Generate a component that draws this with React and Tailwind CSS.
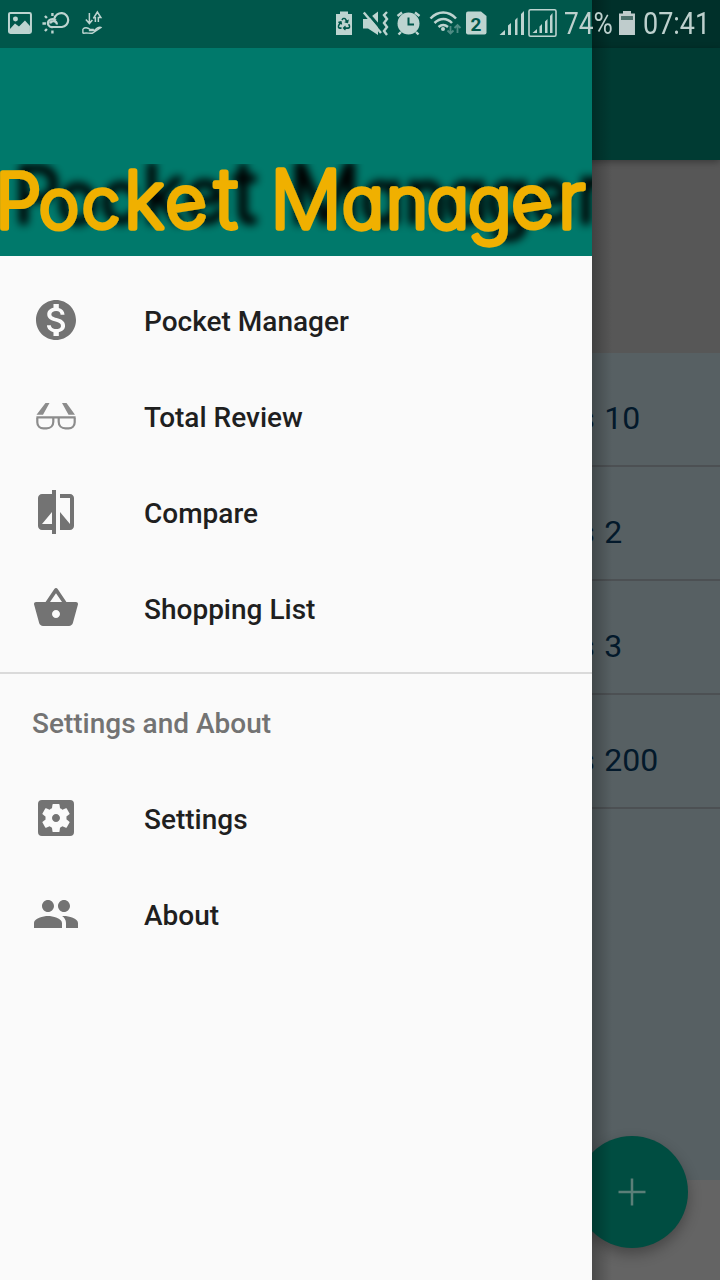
import { MdMonetizationOn, MdCompare, MdShoppingBasket, MdSettingsApplications, MdPeople } from 'react-icons/md';
import { FaRecycle } from 'react-icons/fa';

function Glasses() {
  return (
    <svg className="size-12" viewBox="0 -3.700 48 48" fill="none">
      <path d="M4.500 19 13.500 7.300H17.500L11 19ZM43 19 34.500 7.300H30L36.500 19Z" fill="#8c8c8c" />
      <path d="M4.400 21.600H43.600" stroke="#8c8c8c" strokeWidth="2.200" />
      <path d="M5.300 22V26.500C5.300 30.500 8 32.700 11.500 32.700H14.500C18.500 32.700 21.300 30 21.300 26V22M26.700 22V26C26.700 30 29.500 32.700 33.500 32.700H36.500C40 32.700 42.700 30.500 42.700 26.500V22" stroke="#8c8c8c" strokeWidth="2.200" />
    </svg>
  );
}

function Item({ icon, label }) {
  return (
    <li className="flex h-24 items-center pl-8">
      <span className="flex size-12 text-5xl text-[#737373]">{icon}</span>
      <span className="ml-16 pt-[3px] text-[28px] leading-8 font-medium text-[#1f1f1f]">{label}</span>
    </li>
  );
}

function Wordmark() {
  return (
    <svg className="block h-[92px] w-[592px] overflow-hidden" viewBox="0 0 592 92">
      <defs>
        <filter id="shade" x="-40" y="-40" width="700" height="180" filterUnits="userSpaceOnUse">
          <feDropShadow dx="19" dy="-6" stdDeviation="4.500" floodColor="#000" floodOpacity="1" />
        </filter>
      </defs>
      <text
        className="font-['Inter',sans-serif] font-extralight [font-feature-settings:'cv11']"
        fill="#f0b000"
        stroke="#f0b000"
        strokeWidth="5.500"
        strokeLinejoin="round"
        strokeLinecap="round"
        filter="url(#shade)"
        y="64"
        fontSize="71"
      >
        <tspan x="-5" fontSize="75">P</tspan>
        <tspan x="39" fontSize="68">o</tspan>
        <tspan x="82" fontSize="69">c</tspan>
        <tspan x="124" fontSize="79">k</tspan>
        <tspan x="169" y="66" fontSize="71" rotate="-9">e</tspan>
        <tspan x="215" y="64" fontSize="82">t</tspan>
        <tspan x="270" fontSize="80">M</tspan>
        <tspan x="342" fontSize="71">a</tspan>
        <tspan x="386" fontSize="72">n</tspan>
        <tspan x="427" fontSize="71">a</tspan>
        <tspan x="468" y="65" fontSize="74">g</tspan>
        <tspan x="515" y="66" fontSize="71" rotate="-9">e</tspan>
        <tspan x="558" y="64" fontSize="79">r</tspan>
      </text>
    </svg>
  );
}

function StatusLeft() {
  return (
    <svg className="h-12 w-[120px]" viewBox="0 0 120 48" fill="none" stroke="#bdd4d0" strokeWidth="2">
      <rect x="9" y="13" width="22" height="20" rx="1.500" />
      <circle cx="15.500" cy="19" r="2.500" fill="#bdd4d0" stroke="none" />
      <path d="M10 29 15 23.500 19 26.500 25 20.500 30 26V32H10Z" fill="#bdd4d0" stroke="none" />
      <path d="M57 24.500A3.500 3.500 0 0 0 50.200 23.500M54.500 18.500A7 7 0 1 1 62 27H53A4 4 0 0 1 49 20.500C51 18.500 54 18.500 56 20.500" strokeWidth="2.200" />
      <path d="M52.500 13V16M45 16 47 18M42.500 23.500H46M45 31 47 29M52.500 30.500V33.500" strokeWidth="2.400" />
      <path d="M89.500 13V23M86 19.500 89.500 23.500 92.500 20M95.500 22V17M93.500 18.500 97.500 12 101 17.500H98.500V22" strokeWidth="1.500" />
      <path d="M83 29C86 26.500 88.500 28 90.500 29.500H94M83 33.500C86 32 90 34 93 33L101 27.500C99 26.500 97 28 94.500 30.500H89M83 29V33.500" strokeWidth="1.400" />
    </svg>
  );
}

function StatusRight() {
  return (
    <svg className="h-12 w-[232px]" viewBox="328 0 232 48" fill="none" stroke="#bdd4d0">
      <path d="M336 14H340V11.500H348V14H352V35H336Z" fill="#bdd4d0" stroke="none" />
      <FaRecycle x="337.500" y="17.500" size={13} color="#00574b" stroke="none" />
      <path d="M363 19H368L378 11.500V35L368 28.500H363Z" fill="#bdd4d0" stroke="none" />
      <path d="M366 11 384 32" stroke="#00574b" strokeWidth="3" />
      <path d="M363.800 12.500 381 33" strokeWidth="2.400" />
      <path d="M387 12 384 15 387 19 384 23 387 27 384 31 387 35" strokeWidth="2.400" />
      <circle cx="408.500" cy="23.500" r="11" fill="#bdd4d0" stroke="none" />
      <path d="M397.500 16 402 12.500M415 12.500 419.500 16M401 32 398.500 34.500M416 32 418.500 34.500" strokeWidth="2.400" />
      <path d="M408.500 17.500V24.500H414" stroke="#00574b" strokeWidth="2" />
      <path d="M430.500 18.500C438 10.500 448.500 10.500 456 18.500M434.500 23C440 17.500 447 17.500 452 23M438.500 27C441.500 24.500 445 24.500 448 27" strokeWidth="2.500" />
      <circle cx="443" cy="29" r="2" fill="#bdd4d0" stroke="none" />
      <path d="M450.500 26V33M447.500 30.500 450.500 33.500 453.500 30.500M457.500 33V25M454.500 28 457.500 25 460.500 28" stroke="#4f8c84" strokeWidth="1.800" />
      <path d="M468 11.500H481L486.500 16V32.500Q486.500 34.500 484.500 34.500H468Q466 34.500 466 32.500V13.500Q466 11.500 468 11.500Z" fill="#bdd4d0" stroke="none" />
      <text x="476" y="30.500" textAnchor="middle" fontSize="19" fill="#00574b" stroke="none" className="font-['Roboto',sans-serif] font-bold">2</text>
      <path d="M499.500 35 505 30V35ZM508 35V25.500L511 23V35ZM515 35V20L517.500 17.500V35ZM521 35V14L524 11V35Z" fill="#bdd4d0" stroke="none" />
      <rect x="529" y="9.800" width="27" height="26.500" rx="1.500" strokeWidth="1.600" />
      <path d="M532.500 33 537 29V33ZM539.500 33V26.500L542 24V33ZM545 33V21.500L547.500 19V33ZM550 33V16L552.500 13V33Z" fill="#bdd4d0" stroke="none" />
    </svg>
  );
}

export default function App() {
  return (
    <div className="relative h-[1280px] w-[720px] overflow-hidden bg-[#646464] font-['Roboto',sans-serif]">
      <main className="flex h-full flex-col">
        <div className="h-12 bg-[#00302a]" />
        <div className="relative h-28 bg-[#003b33] shadow-[0_2px_7px_rgba(0,0,0,0.35)]" />
        <div className="h-[193px] bg-[#575757]" />
        <ul className="h-[827px] bg-[#576063]">
          {['10', '2', '3', '200'].map((amount) => (
            <li key={amount} className="flex h-[114px] items-center border-b-2 border-[#4c5053] pt-[17px] pl-[558.5px] text-[32px] [word-spacing:1.5px] text-[#03192b]">
              Rs {amount}
            </li>
          ))}
        </ul>
      </main>
      <button className="absolute top-[1136px] left-[576px] flex size-28 items-center justify-center rounded-full bg-[#004d41] shadow-[0_6px_14px_rgba(0,0,0,0.3)]">
        <svg className="size-7" viewBox="0 0 28 28" stroke="#5b7f78" strokeWidth="2.500">
          <path d="M14 0.500V27.500M0.500 14H27.500" />
        </svg>
      </button>
      <div className="absolute top-0 left-[592px] h-full w-5 bg-linear-to-r from-black/25 to-transparent" />
      <aside className="absolute top-0 left-0 flex h-full w-[592px] flex-col bg-[#fafafa]">
        <header className="flex h-64 flex-col bg-[#00796b]">
          <div className="h-12 bg-[#00574b]" />
          <div className="h-[116px]" />
          <Wordmark />
        </header>
        <ul className="py-4">
          <Item icon={<MdMonetizationOn />} label="Pocket Manager" />
          <Item icon={<Glasses />} label="Total Review" />
          <Item icon={<MdCompare />} label="Compare" />
          <Item icon={<MdShoppingBasket />} label="Shopping List" />
        </ul>
        <div className="h-0.5 bg-[#dadada]" />
        <h2 className="flex h-24 items-center pt-[3px] pl-8 text-[28px] font-medium text-[#737373]">Settings and About</h2>
        <ul>
          <Item icon={<MdSettingsApplications />} label="Settings" />
          <Item icon={<MdPeople />} label="About" />
        </ul>
      </aside>
      <div className="absolute top-0 left-0 flex h-12 w-full items-center text-[31px] text-[#bdd0cd]">
        <StatusLeft />
        <div className="ml-52">
          <StatusRight />
        </div>
        <span className="ml-1 w-[55px] origin-left scale-x-[0.85] whitespace-nowrap">74%</span>
        <svg className="-mt-0.5 h-6 w-4" viewBox="0 0 16 24">
          <path d="M0 2.500H4V0H12V2.500H16V24H0Z" fill="#bfcccc" />
          <path d="M2 5H14V9H2Z" fill="#4c716c" />
        </svg>
        <span className="ml-2 origin-left scale-x-[0.87] whitespace-nowrap">07:41</span>
      </div>
    </div>
  );
}
